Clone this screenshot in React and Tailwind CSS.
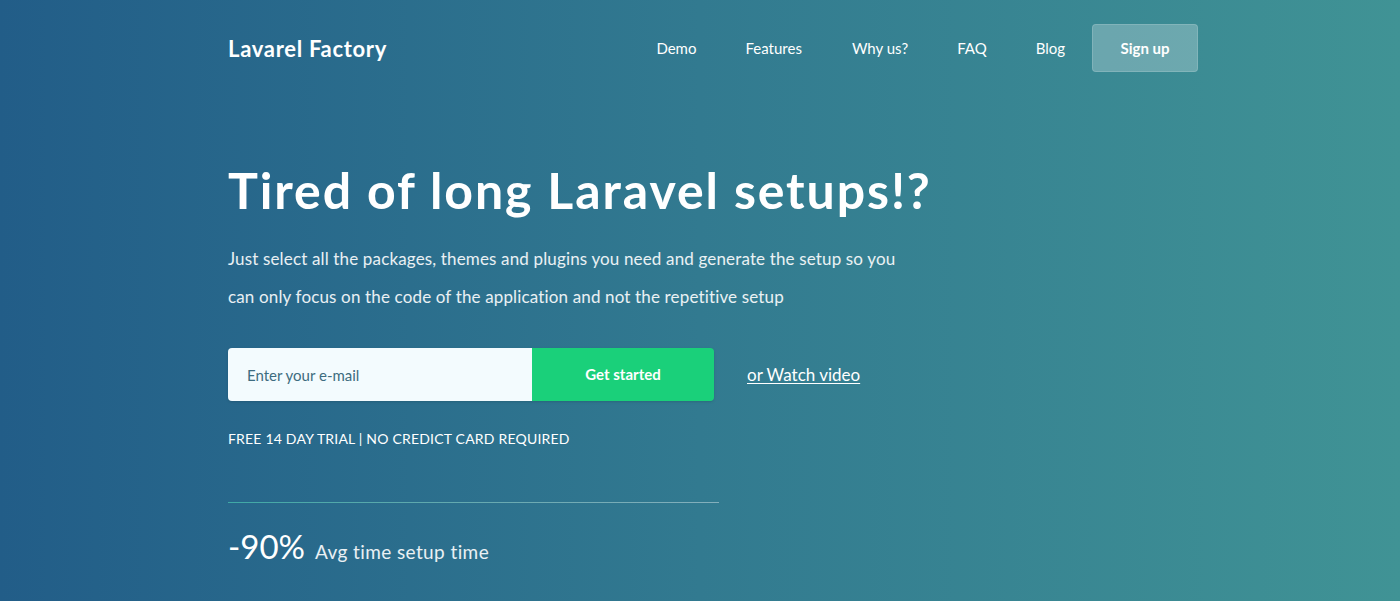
export default function App() {
  return (
    <div
      className="min-h-screen w-full bg-gradient-to-r from-[#225d88] via-[#327a90] to-[#409395] text-white"
      style={{ fontFamily: "Lato, 'Open Sans', sans-serif" }}
    >
      <div className="ml-[228px] w-[970px]">
        {/* Nav */}
        <nav className="flex h-[96px] items-center justify-between">
          <a className="text-[22px] font-bold tracking-[0.7px]">Lavarel Factory</a>
          <div className="flex items-center">
            <a className="mr-[49px] text-[15px]">Demo</a>
            <a className="mr-[50px] text-[15px]">Features</a>
            <a className="mr-[49px] text-[15px]">Why us?</a>
            <a className="mr-[49px] text-[15px]">FAQ</a>
            <a className="mr-[27px] text-[15px]">Blog</a>
            <button className="h-[48px] w-[106px] rounded-[4px] border border-white/15 bg-white/25 text-[15px] font-bold">
              Sign up
            </button>
          </div>
        </nav>

        {/* Hero */}
        <div className="pt-[62px]">
          <h1 className="text-[50px] font-bold leading-[64px] tracking-[1.9px]">
            Tired of long Laravel setups!?
          </h1>
          <p className="mt-[18px] w-[684px] text-[17px] leading-[38px] tracking-[0.15px] text-white/90">
            Just select all the packages, themes and plugins you need and generate the setup so you can only
            focus on the code of the application and not the repetitive setup
          </p>

          <div className="mt-[32px] flex items-center">
            <div className="flex h-[53px] w-[486px] overflow-hidden rounded-[4px] shadow-sm">
              <input
                placeholder="Enter your e-mail"
                className="h-full w-[304px] bg-[#f3fbfe] px-[19px] text-[15px] text-[#2b5f78] outline-none placeholder:text-[#3d6c80]"
              />
              <button className="h-full flex-1 bg-[#1ad07a] text-[15px] font-bold">Get started</button>
            </div>
            <a className="ml-[33px] text-[17px] underline underline-offset-2">or Watch video</a>
          </div>

          <p className="mt-[27px] text-[14px] uppercase tracking-[0.2px]">
            Free 14 day trial | No credict card required
          </p>

          <div className="mt-[53px] h-px w-[491px] bg-gradient-to-r from-[#3fa9a6] to-white/40" />

          <div className="mt-[19px] flex items-baseline">
            <span className="text-[33px]">-90%</span>
            <span className="ml-[10px] text-[19px] tracking-[0.4px] text-white/90">Avg time setup time</span>
          </div>
        </div>
      </div>
    </div>
  );
}
